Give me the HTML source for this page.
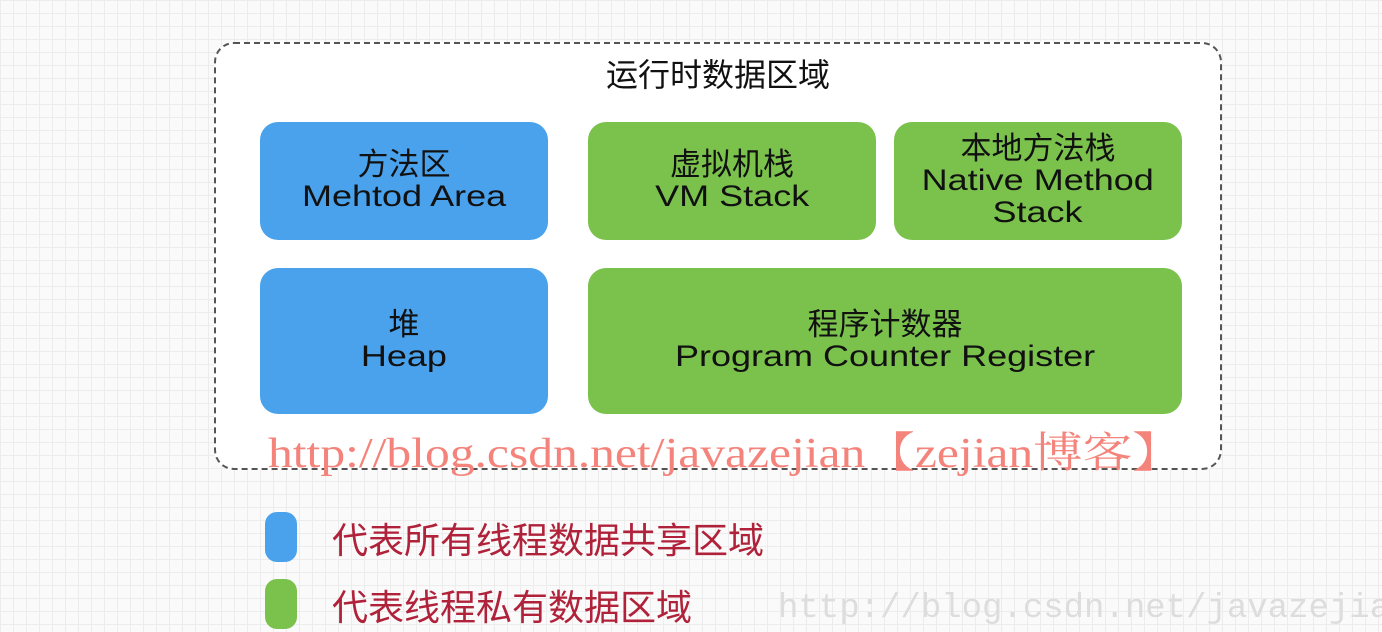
<!DOCTYPE html><html><head><meta charset="utf-8"><style>
body{margin:0;width:1382px;height:632px;overflow:hidden;position:relative;background-color:#fafafa;
background-image:linear-gradient(#ececec 1px,transparent 1px),linear-gradient(90deg,#ececec 1px,transparent 1px);background-size:13px 13px;
font-family:"Liberation Sans","Noto Sans CJK SC",sans-serif;}
.c{position:absolute;left:214px;top:42px;width:1004px;height:424px;border:2px dashed #555;border-radius:20px;background:#fff;}
.t{position:absolute;left:214px;top:50px;width:1008px;text-align:center;font-size:32px;color:#111;}
.b{position:absolute;border-radius:18px;display:flex;flex-direction:column;align-items:center;justify-content:center;text-align:center;color:#111;font-size:31px;line-height:32px;}
.b span{display:block;transform:scaleX(1.2);white-space:nowrap;font-size:30px}
.bl{background:#4aa2ec}.gr{background:#7bc24d}
.u{position:absolute;left:268px;top:420px;font-family:"Liberation Serif","Noto Serif CJK SC",serif;font-size:42px;color:#f4837b;white-space:nowrap;transform:scaleX(1.18);transform-origin:0 0;}
.sq{position:absolute;left:265px;width:32px;height:50px;border-radius:12px;}
.lg{position:absolute;left:332px;font-size:36px;color:#b0213a;white-space:nowrap;}
.w{position:absolute;left:778px;top:590px;font-family:"Liberation Mono",monospace;font-size:34px;color:#ddd;white-space:nowrap;}
</style></head><body>
<div class="c"></div>
<div class="t">运行时数据区域</div>
<div class="b bl" style="left:260px;top:122px;width:288px;height:118px">方法区<span>Mehtod Area</span></div>
<div class="b gr" style="left:588px;top:122px;width:288px;height:118px">虚拟机栈<span>VM Stack</span></div>
<div class="b gr" style="left:894px;top:122px;width:288px;height:118px">本地方法栈<span>Native Method</span><span>Stack</span></div>
<div class="b bl" style="left:260px;top:268px;width:288px;height:146px">堆<span>Heap</span></div>
<div class="b gr" style="left:588px;top:268px;width:594px;height:146px">程序计数器<span>Program Counter Register</span></div>
<div class="u">http://blog.csdn.net/javazejian【zejian博客】</div>
<div class="sq" style="top:512px;background:#4aa2ec"></div>
<div class="sq" style="top:579px;background:#7bc24d"></div>
<div class="lg" style="top:512px">代表所有线程数据共享区域</div>
<div class="lg" style="top:579px">代表线程私有数据区域</div>
<div class="w">http://blog.csdn.net/javazejian</div>
</body></html>
